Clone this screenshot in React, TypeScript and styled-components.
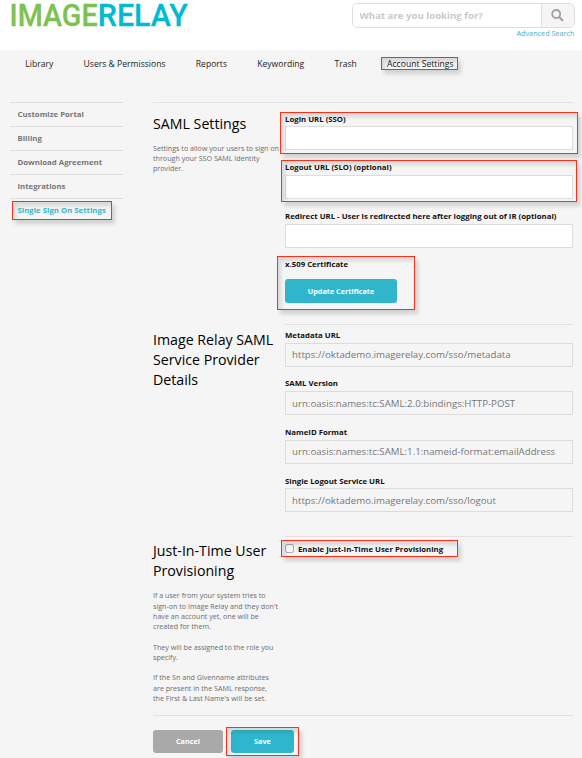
import React from "react";
import styled, { createGlobalStyle } from "styled-components";

const GlobalStyle = createGlobalStyle`
  * { box-sizing: border-box; }
  body { margin: 0; background: #f5f5f5; font-family: "Open Sans", sans-serif; color: #111; }
  input, button { font-family: inherit; margin: 0; }
`;

const Page = styled.div`
  width: 582px;
  height: 758px;
  overflow: hidden;
  background: #f5f5f5;
`;

const Header = styled.header`
  display: flex;
  justify-content: space-between;
  height: 50px;
  padding: 0 7.5px 0 8px;
  background: #fff;
`;

const Logo = styled.svg`
  display: block;
  width: 190px;
  height: 40px;
  overflow: visible;
  font: 500 31px Roboto, sans-serif;
`;

const SearchArea = styled.div`
  display: flex;
  flex-direction: column;
  align-items: flex-end;
  padding-top: 3px;
`;

const SearchBox = styled.div`
  display: flex;
  width: 223px;
  height: 25px;
  border: 1px solid #dedede;
  border-radius: 5px;
  overflow: hidden;
`;

const SearchInput = styled.input`
  flex: 1;
  min-width: 0;
  padding: 0 0 1px 7px;
  border: 0;
  background: #fff;
  font-size: 9.65px;
  font-weight: 700;
  &::placeholder { color: #c9c9c9; opacity: 1; }
`;

const SearchButton = styled.button`
  display: flex;
  align-items: center;
  justify-content: center;
  width: 33px;
  padding: 0;
  border: 0;
  border-left: 1px solid #dedede;
  background: #f5f5f5;
`;

const AdvancedLink = styled.a`
  font-size: 7.27px;
  line-height: 10px;
  color: #46b4c8;
`;

const Nav = styled.nav`
  display: flex;
  gap: 30.2px;
  height: 52px;
  padding: 7px 0 0 25.3px;
`;

const NavItem = styled.a`
  position: relative;
  height: 13px;
  font-size: 8.6px;
  line-height: 14px;
  color: #222;
  white-space: nowrap;
`;

/* Red call-out frame laid over the element it marks. */
const Callout = styled.span<{ $t: number; $r: number; $b: number; $l: number }>`
  position: absolute;
  z-index: 1;
  top: ${(p) => -p.$t}px;
  right: ${(p) => -p.$r}px;
  bottom: ${(p) => -p.$b}px;
  left: ${(p) => -p.$l}px;
  border: 1px solid #fa301a;
  box-shadow: 3px 4px 4px rgba(0, 0, 0, 0.15), inset 3px 4px 4px rgba(0, 0, 0, 0.12);
  pointer-events: none;
`;

const Body = styled.div`
  display: flex;
  gap: 30px;
  padding-left: 10px;
`;

const Sidebar = styled.aside`
  width: 113px;
`;

const SideItem = styled.div<{ $active?: boolean }>`
  height: 23.9px;
  padding-left: 7.5px;
  border-top: 1px solid #dfdfdf;
  font-size: 7.8px;
  font-weight: 700;
  line-height: 23.5px;
  color: ${(p) => (p.$active ? "#38b5cb" : "#777")};
`;

const SideLabel = styled.span`
  position: relative;
  display: inline-block;
  white-space: nowrap;
`;

const Main = styled.main`
  width: 420px;
`;

const Section = styled.section<{ $height: number; $rule?: boolean }>`
  display: grid;
  grid-template-columns: 132px 288px;
  height: ${(p) => p.$height}px;
  border-top: 1px solid ${(p) => (p.$rule ? "#e2e2e2" : "transparent")};
`;

const Intro = styled.div<{ $top: number }>`
  padding-top: ${(p) => p.$top}px;
  white-space: nowrap;
`;

const Title = styled.h2`
  margin: 0 0 9px;
  font-size: 14.2px;
  font-weight: 400;
  line-height: 20px;
  color: #000;
`;

const Note = styled.p`
  margin: 0 0 10.4px;
  font-size: 7.15px;
  line-height: 10.2px;
  color: #6c6c6c;
`;

const Fields = styled.div<{ $rule?: boolean; $top: number }>`
  margin-top: -1px;
  padding-top: ${(p) => p.$top}px;
  border-top: 1px solid ${(p) => (p.$rule ? "#e2e2e2" : "transparent")};
`;

const Field = styled.div`
  position: relative;
  height: 48.6px;
`;

const Label = styled.label`
  display: block;
  height: 12.8px;
  font-size: 7.8px;
  font-weight: 700;
  line-height: 11px;
  white-space: nowrap;
`;

const TextInput = styled.input`
  display: block;
  width: 288px;
  height: 24px;
  padding: 0 6px;
  border: 1px solid #dcdcdc;
  border-radius: 0;
  background: #fff;
  font-size: 9.7px;
  color: #777;
  &:read-only { background: #f5f5f5; }
`;

const Button = styled.button<{ $width: number; $muted?: boolean }>`
  display: block;
  width: ${(p) => p.$width}px;
  height: 23.5px;
  padding: 0;
  border: 0;
  border-radius: 3px;
  background: ${(p) => (p.$muted ? "#a9a9a9" : "#2fb6cc")};
  color: #fff;
  font-size: 7.25px;
  font-weight: 700;
`;

const CertBlock = styled.div`
  position: relative;
  width: 112px;
  height: 43px;
`;

const CertLabel = styled(Label)`
  height: 19.9px;
`;

const CheckRow = styled.label`
  position: relative;
  display: flex;
  align-items: center;
  gap: 4px;
  width: 160px;
  height: 11px;
  font-size: 7.8px;
  font-weight: 700;
  white-space: nowrap;
`;

const CheckBox = styled.input`
  appearance: none;
  width: 9px;
  height: 9px;
  border: 1px solid #aaa;
  border-radius: 2px;
  background: #f7f7f7;
`;

const Actions = styled.div`
  display: flex;
  gap: 8px;
  padding-top: 13.6px;
  border-top: 1px solid #e0e0e0;
`;

const ButtonWrap = styled.div`
  position: relative;
  height: 23.5px;
`;

const navItems = ["Library", "Users & Permissions", "Reports", "Keywording", "Trash"];
const sideItems = ["Customize Portal", "Billing", "Download Agreement", "Integrations"];
const details = [
  ["Metadata URL", "https://oktademo.imagerelay.com/sso/metadata"],
  ["SAML Version", "urn:oasis:names:tc:SAML:2.0:bindings:HTTP-POST"],
  ["NameID Format", "urn:oasis:names:tc:SAML:1.1:nameid-format:emailAddress"],
  ["Single Logout Service URL", "https://oktademo.imagerelay.com/sso/logout"],
];

export default function App() {
  return (
    <Page>
      <GlobalStyle />
      <Header>
        <Logo viewBox="0 0 190 40">
          <text x="1.6" y="26" fill="#7dc153" stroke="#7dc153" strokeWidth="0.3" textLength="88" lengthAdjust="spacingAndGlyphs">IMAGE</text>
          <text x="89.8" y="26" fill="#00b9d3" stroke="#00b9d3" strokeWidth="0.3" textLength="90" lengthAdjust="spacingAndGlyphs">RELAY</text>
        </Logo>
        <SearchArea>
          <SearchBox>
            <SearchInput placeholder="What are you looking for?" />
            <SearchButton aria-label="Search">
              <svg width="13" height="13" viewBox="0 0 13 13" fill="none" stroke="#a0a0a0">
                <circle cx="5.2" cy="5" r="4" strokeWidth="1.8" />
                <path d="M8.4 8.2L11.4 11.2" strokeWidth="2.2" strokeLinecap="round" />
              </svg>
            </SearchButton>
          </SearchBox>
          <AdvancedLink>Advanced Search</AdvancedLink>
        </SearchArea>
      </Header>
      <Nav>
        {navItems.map((n) => (
          <NavItem key={n}>{n}</NavItem>
        ))}
        <NavItem>
          Account Settings
          <Callout $t={0} $r={4} $b={0} $l={6} />
        </NavItem>
      </Nav>
      <Body>
        <Sidebar>
          {sideItems.map((s) => (
            <SideItem key={s}>{s}</SideItem>
          ))}
          <SideItem $active>
            <SideLabel>
              Single Sign On Settings
              <Callout $t={-2.5} $r={6} $b={-2.5} $l={6} />
            </SideLabel>
          </SideItem>
        </Sidebar>
        <Main>
          <Section $height={222} $rule>
            <Intro $top={10.6}>
              <Title>SAML Settings</Title>
              <Note>
                Settings to allow your users to sign on<br />
                through your SSO SAML Identity<br />
                provider.
              </Note>
            </Intro>
            <Fields $top={10.6}>
              <Field>
                <Label>Login URL (SSO)</Label>
                <TextInput />
                <Callout $t={2} $r={5} $b={-8} $l={5} />
              </Field>
              <Field>
                <Label>Logout URL (SLO) (optional)</Label>
                <TextInput />
                <Callout $t={2} $r={4} $b={-8.4} $l={4} />
              </Field>
              <Field>
                <Label>Redirect URL - User is redirected here after logging out of IR (optional)</Label>
                <TextInput />
              </Field>
              <CertBlock>
                <CertLabel>x.509 Certificate</CertLabel>
                <Button $width={112}>Update Certificate</Button>
                <Callout $t={3} $r={18} $b={7.5} $l={8} />
              </CertBlock>
            </Fields>
          </Section>
          <Section $height={212}>
            <Intro $top={4.6}>
              <Title>
                Image Relay SAML<br />
                Service Provider<br />
                Details
              </Title>
            </Intro>
            <Fields $rule $top={4.8}>
              {details.map(([label, value]) => (
                <Field key={label}>
                  <Label>{label}</Label>
                  <TextInput readOnly value={value} />
                </Field>
              ))}
            </Fields>
          </Section>
          <Section $height={179}>
            <Intro $top={4.4}>
              <Title>
                Just-In-Time User<br />
                Provisioning
              </Title>
              <Note>
                If a user from your system tries to<br />
                sign-on to Image Relay and they don't<br />
                have an account yet, one will be<br />
                created for them.
              </Note>
              <Note>
                They will be assigned to the role you<br />
                specify.
              </Note>
              <Note>
                If the Sn and Givenname attributes<br />
                are present in the SAML response,<br />
                the First &amp; Last Name's will be set.
              </Note>
            </Intro>
            <Fields $rule $top={6}>
              <CheckRow>
                <CheckBox type="checkbox" />
                Enable Just-In-Time User Provisioning
                <Callout $t={3} $r={13} $b={3} $l={4} />
              </CheckRow>
            </Fields>
          </Section>
          <Actions>
            <Button $width={70} $muted>Cancel</Button>
            <ButtonWrap>
              <Button $width={63}>Save</Button>
              <Callout $t={3} $r={5} $b={3} $l={5} />
            </ButtonWrap>
          </Actions>
        </Main>
      </Body>
    </Page>
  );
}
